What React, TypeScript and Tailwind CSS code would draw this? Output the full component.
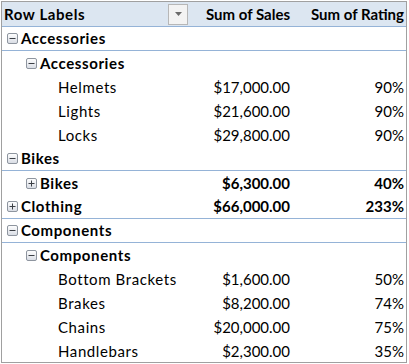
import React from "react";

type Row = {
  label: string;
  level: 0 | 1 | 2;
  icon?: "minus" | "plus";
  sales?: string;
  rating?: string;
  bold?: boolean;
  line?: boolean;
};

const rows: Row[] = [
  { label: "Accessories", level: 0, icon: "minus", bold: true, line: true },
  { label: "Accessories", level: 1, icon: "minus", bold: true },
  { label: "Helmets", level: 2, sales: "$17,000.00", rating: "90%" },
  { label: "Lights", level: 2, sales: "$21,600.00", rating: "90%" },
  { label: "Locks", level: 2, sales: "$29,800.00", rating: "90%" },
  { label: "Bikes", level: 0, icon: "minus", bold: true, line: true },
  { label: "Bikes", level: 1, icon: "plus", bold: true, sales: "$6,300.00", rating: "40%" },
  { label: "Clothing", level: 0, icon: "plus", bold: true, sales: "$66,000.00", rating: "233%", line: true },
  { label: "Components", level: 0, icon: "minus", bold: true, line: true },
  { label: "Components", level: 1, icon: "minus", bold: true },
  { label: "Bottom Brackets", level: 2, sales: "$1,600.00", rating: "50%" },
  { label: "Brakes", level: 2, sales: "$8,200.00", rating: "74%" },
  { label: "Chains", level: 2, sales: "$20,000.00", rating: "75%" },
  { label: "Handlebars", level: 2, sales: "$2,300.00", rating: "35%" },
];

function Toggle({ kind }: { kind: "minus" | "plus" }) {
  return (
    <svg width="11" height="11" viewBox="0 0 11 11" className="shrink-0">
      <defs>
        <linearGradient id={`g-${kind}`} x1="0" y1="0" x2="0" y2="1">
          <stop offset="0" stopColor="#ffffff" />
          <stop offset="1" stopColor="#d8dce4" />
        </linearGradient>
      </defs>
      <rect x="0.5" y="0.5" width="10" height="10" rx="1.5" fill={`url(#g-${kind})`} stroke="#8e959f" />
      <rect x="2.5" y="5" width="6" height="1" fill="#3b3f45" />
      {kind === "plus" && <rect x="5" y="2.5" width="1" height="6" fill="#3b3f45" />}
    </svg>
  );
}

export default function App() {
  return (
    <div className="w-[409px] h-[364px] bg-white overflow-hidden" style={{ fontFamily: "Lato, 'Liberation Sans', sans-serif" }}>
      <div className="ml-[1px] mt-[1px] w-[406px] h-[362px] border border-[#a0a0a0] overflow-hidden text-[15px] text-black">
        <div className="flex h-[25px] bg-[#dce6f1] border-b border-[#95b3d7] font-bold items-center">
          <div className="w-[198px] flex items-center justify-between pl-[2px] pr-[12px]">
            <span className="tracking-[0.6px]">Row Labels</span>
            <div className="w-[20px] h-[21px] bg-[#f3f3f3] border border-[#b7b7b7] flex items-center justify-center">
              <svg width="7" height="4" viewBox="0 0 7 4">
                <path d="M0 0 H7 L3.5 4 Z" fill="#6b6b6b" />
              </svg>
            </div>
          </div>
          <div className="w-[90px] text-right whitespace-nowrap">Sum of Sales</div>
          <div className="flex-1 text-right whitespace-nowrap pr-[2px]">Sum of Rating</div>
        </div>
        {rows.map((r, i) => (
          <div
            key={i}
            className={`flex h-[24px] items-center ${r.bold ? "font-bold" : ""} ${r.line ? "border-b border-[#95b3d7]" : ""}`}
          >
            <div
              className={`w-[198px] flex items-center gap-[3px] ${
                r.level === 0 ? "pl-[5px]" : r.level === 1 ? "pl-[24px]" : "pl-[56px]"
              }`}
            >
              {r.icon && <Toggle kind={r.icon} />}
              <span className="whitespace-nowrap tracking-[0.6px]">{r.label}</span>
            </div>
            <div className="w-[90px] text-right whitespace-nowrap">{r.sales ?? ""}</div>
            <div className="flex-1 text-right whitespace-nowrap pr-[2px]">{r.rating ?? ""}</div>
          </div>
        ))}
      </div>
    </div>
  );
}
